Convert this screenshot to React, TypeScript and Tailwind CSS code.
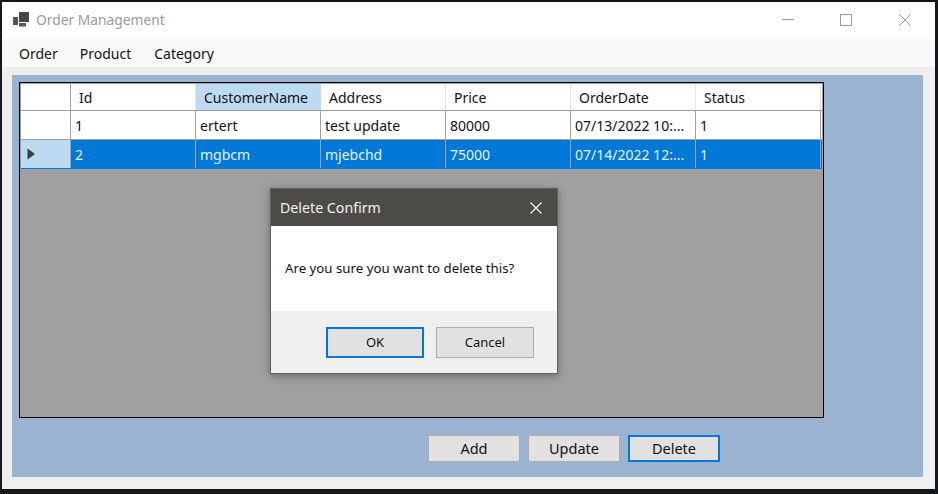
import React from 'react';

const font = "font-['Noto_Sans','Open_Sans',sans-serif]";

const columns = ['Id', 'CustomerName', 'Address', 'Price', 'OrderDate', 'Status'];

const rows = [
  ['1', 'ertert', 'test update', '80000', '07/13/2022 10:...', '1'],
  ['2', 'mgbcm', 'mjebchd', '75000', '07/14/2022 12:...', '1'],
];

const CloseIcon = ({ color, width }: { color: string; width: number }) => (
  <svg width="12" height="12" viewBox="0 0 12 12">
    <path d="M0.5 0.5 L11.5 11.5 M11.5 0.5 L0.5 11.5" stroke={color} strokeWidth={width} fill="none" />
  </svg>
);

const FlatButton = ({ label, focused }: { label: string; focused?: boolean }) => (
  <button
    className={
      'w-[92px] h-[27px] bg-[#e1e1e1] text-[14.5px] text-[#111] flex items-center justify-center ' +
      (focused ? 'border-2 border-[#0078d7]' : 'border border-[#adadad]')
    }
  >
    {label}
  </button>
);

const DialogButton = ({ label, focused }: { label: string; focused?: boolean }) => (
  <button
    className={
      'w-[98px] h-[31px] bg-[#e1e1e1] text-[13px] text-[#111] flex items-center justify-center ' +
      (focused ? 'border-2 border-[#0078d7]' : 'border border-[#adadad]')
    }
  >
    {label}
  </button>
);

export default function App() {
  return (
    <div className={`relative w-[938px] h-[494px] overflow-hidden bg-[#14181d] pt-[2px] pl-[2px] pb-[5px] ${font}`}>
      <div className="w-[933px] h-[487px] flex flex-col bg-[#efefef]">
        {/* title bar */}
        <div className="h-[37px] shrink-0 bg-white flex items-center pl-[11px]">
          <svg width="17" height="15" viewBox="0 0 17 15" className="mr-[6px] mb-[2px]">
            <rect x="6" y="0" width="10" height="10" fill="#474747" />
            <rect x="0" y="5" width="5" height="8" fill="#555" />
            <rect x="6" y="11" width="7" height="3.5" fill="#555" />
          </svg>
          <span className="text-[13.8px] text-[#9a9a9a]">Order Management</span>
          <div className="ml-auto flex items-center pr-[24px] gap-[46px] mb-px">
            <svg width="12" height="12" viewBox="0 0 12 12">
              <path d="M0 5.5 H12" stroke="#9a9a9a" strokeWidth="1" />
            </svg>
            <svg width="12" height="12" viewBox="0 0 12 12">
              <rect x="0.5" y="0.5" width="11" height="11" stroke="#9a9a9a" strokeWidth="1" fill="none" />
            </svg>
            <div className="ml-px">
              <CloseIcon color="#9a9a9a" width={1} />
            </div>
          </div>
        </div>

        {/* menu */}
        <div className="h-[28px] shrink-0 bg-[#f9f9f9] flex items-center pl-[17px] gap-[22px] text-[14px] text-[#111]">
          <span>Order</span>
          <span>Product</span>
          <span className="ml-px">Category</span>
        </div>

        {/* panel */}
        <div className="mt-[8px] ml-[10px] w-[911px] h-[402px] bg-[#9ab3d1] pt-[7px] pl-[7px]">
          <div className="w-[805px] h-[336px] border border-black bg-[#a0a0a0] pt-px pl-px">
            <div className="flex h-[27px] w-[801px] bg-white border-b border-[#a0a0a0] text-[14px] text-[#111]">
              <div className="w-[50px] border-r border-[#a0a0a0]" />
              {columns.map((c) => (
                <div
                  key={c}
                  className={
                    'w-[125px] pl-[8px] flex items-center border-r ' +
                    (c === 'CustomerName' ? 'bg-[#bcdaf2] border-[#bcdaf2]' : 'border-[#e4e4e4]')
                  }
                >
                  {c}
                </div>
              ))}
            </div>
            {rows.map((r, i) => (
              <div
                key={r[0]}
                className={
                  'flex h-[29px] w-[801px] border-b text-[14px] ' +
                  (i === 1 ? 'bg-[#0078d7] text-[#e8f2fb] border-[#0078d7]' : 'bg-white text-[#111] border-[#a0a0a0]')
                }
              >
                <div
                  className={
                    'w-[50px] shrink-0 border-r border-[#a0a0a0] flex items-center pl-[6px] ' +
                    (i === 1 ? 'bg-[#bcdaf2]' : 'bg-white')
                  }
                >
                  {i === 1 && (
                    <svg width="9" height="12" viewBox="0 0 9 12">
                      <path d="M0.5 0.5 L8 6 L0.5 11.5 Z" fill="#3f3f3f" />
                    </svg>
                  )}
                </div>
                {r.map((v, j) => (
                  <div key={j} className="w-[125px] shrink-0 pl-[4px] flex items-center border-r border-[#a0a0a0] whitespace-nowrap overflow-hidden">
                    {v}
                  </div>
                ))}
              </div>
            ))}
          </div>

          <div className="mt-[17px] ml-[409px] flex gap-[8px]">
            <FlatButton label="Add" />
            <FlatButton label="Update" />
            <FlatButton label="Delete" focused />
          </div>
        </div>
      </div>

      {/* confirm dialog */}
      <div className="absolute left-[270px] top-[188px] w-[288px] h-[186px] border border-[#5f5f5f] flex flex-col shadow-[0_2px_8px_rgba(0,0,0,0.35)]">
        <div className="h-[37px] shrink-0 bg-[#4d4b48] flex items-center justify-between pl-[9px] pr-[15px] text-[14.2px] text-[#f2f2f2]">
          <span>Delete Confirm</span>
          <CloseIcon color="#ffffff" width={1.1} />
        </div>
        <div className="h-[85px] shrink-0 bg-white flex items-center pl-[14px] text-[13.25px] text-[#111]">
          Are you sure you want to delete this?
        </div>
        <div className="flex-1 bg-[#efefef] flex items-start pt-[16px] pl-[55px] gap-[12px]">
          <DialogButton label="OK" focused />
          <DialogButton label="Cancel" />
        </div>
      </div>
    </div>
  );
}
